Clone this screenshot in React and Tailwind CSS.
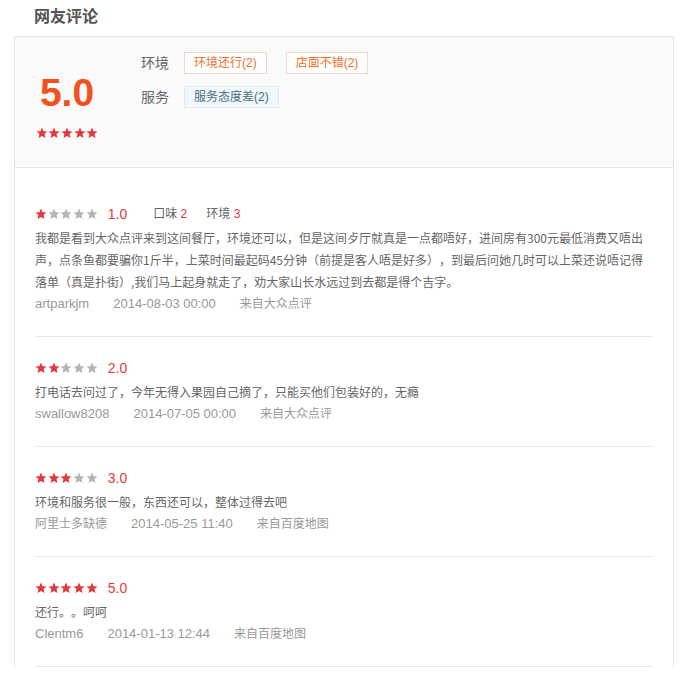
import React from 'react';

const reviews = [
  {
    stars: 1,
    score: '1.0',
    sub: [['口味', 2], ['环境', 3]],
    text: '我都是看到大众点评来到这间餐厅，环境还可以，但是这间歺厅就真是一点都唔好，进间房有300元最低消费又唔出声，点条鱼都要骗你1斤半，上菜时间最起码45分钟（前提是客人唔是好多），到最后问她几时可以上菜还说唔记得落单（真是扑街）,我们马上起身就走了，劝大家山长水远过到去都是得个吉字。',
    user: 'artparkjm',
    time: '2014-08-03 00:00',
    from: '来自大众点评',
  },
  {
    stars: 2,
    score: '2.0',
    sub: [],
    text: '打电话去问过了，今年无得入果园自己摘了，只能买他们包装好的，无瘾',
    user: 'swallow8208',
    time: '2014-07-05 00:00',
    from: '来自大众点评',
  },
  {
    stars: 3,
    score: '3.0',
    sub: [],
    text: '环境和服务很一般，东西还可以，整体过得去吧',
    user: '阿里士多缺德',
    time: '2014-05-25 11:40',
    from: '来自百度地图',
  },
  {
    stars: 5,
    score: '5.0',
    sub: [],
    text: '还行。。呵呵',
    user: 'Clentm6',
    time: '2014-01-13 12:44',
    from: '来自百度地图',
  },
];

function Star({ on }) {
  return (
    <svg width="12" height="12" viewBox="0 0 24 24" className={on ? 'fill-[#e4393c]' : 'fill-[#b5b5b5]'}>
      <path d="M12 1l3.2 7.3 7.9.7-6 5.2 1.8 7.8L12 17.9 5.1 22l1.8-7.8-6-5.2 7.9-.7z" />
    </svg>
  );
}

function Stars({ n }) {
  return (
    <div className="flex gap-[0.7px]">
      {[1, 2, 3, 4, 5].map(i => (
        <Star key={i} on={i <= n} />
      ))}
    </div>
  );
}

export default function App() {
  const font = { fontFamily: '"Liberation Sans", "Noto Sans CJK SC", sans-serif' };

  return (
    <div className="bg-white min-h-[681px]" style={font}>

      {/* 标题 */}
      <h3 className="pl-[34px] h-[36px] leading-[33px] text-[16px] font-bold text-[#555]">
        网友评论
      </h3>

      <div className="ml-[14px] w-[660px] border border-[#e5e5e5] border-b-0">

        {/* 总评分 */}
        <div className="h-[131px] bg-[#fafafa] border-b border-[#e8e8e8] flex">
          <div className="w-[104px] flex flex-col items-center pt-[36px]">
            <div className="text-[39px] leading-[40px] font-bold text-[#ef521f]">5.0</div>
            <div className="mt-[14px]">
              <Stars n={5} />
            </div>
          </div>

          <div className="ml-[22px] pt-[15px] flex flex-col gap-[12px]">
            <div className="flex items-center h-[22px]">
              <span className="text-[14px] text-[#666] w-[43px]">环境</span>
              <span className="h-[22px] leading-[20px] px-[9px] border border-[#f8d6c3] bg-white text-[12px] text-[#f0702a]">环境还行(2)</span>
              <span className="ml-[19px] h-[22px] leading-[20px] px-[9px] border border-[#f8d6c3] bg-white text-[12px] text-[#f0702a]">店面不错(2)</span>
            </div>
            <div className="flex items-center h-[22px]">
              <span className="text-[14px] text-[#666] w-[43px]">服务</span>
              <span className="h-[22px] leading-[20px] px-[9px] border border-[#dfecf2] bg-[#f0f7fa] text-[12px] text-[#4b6e7e]">服务态度差(2)</span>
            </div>
          </div>
        </div>

        {/* 评论列表 */}
        <div className="px-[20px] pt-[15px]">
          {reviews.map((r, idx) => (
            <div key={idx} className="pt-[18px] pb-[21px] border-b border-[#e8e8e8]">
              <div className="h-[26px] flex items-center">
                <Stars n={r.stars} />
                <span className="ml-[10px] text-[14px] text-[#e4393c]">{r.score}</span>
                {r.sub.map(([k, v], i) => (
                  <span key={k} className={(i === 0 ? 'ml-[26px]' : 'ml-[19px]') + ' text-[12px] text-[#666]'}>
                    {k} <span className="text-[#e4393c]">{v}</span>
                  </span>
                ))}
              </div>
              <p
                className="text-[12px] leading-[22px] text-[#666] [text-spacing-trim:space-all]"
                style={{ fontFamily: '"Noto Sans CJK SC", "Liberation Sans", sans-serif' }}
              >
                {r.text}
              </p>
              <div className="flex gap-6 text-[13px] leading-[22px] text-[#999]">
                <span className={/^[\x00-\x7f]+$/.test(r.user) ? '' : 'text-[12px]'}>{r.user}</span>
                <span>{r.time}</span>
                <span className="text-[12px]">{r.from}</span>
              </div>
            </div>
          ))}
        </div>
      </div>
    </div>
  );
}
